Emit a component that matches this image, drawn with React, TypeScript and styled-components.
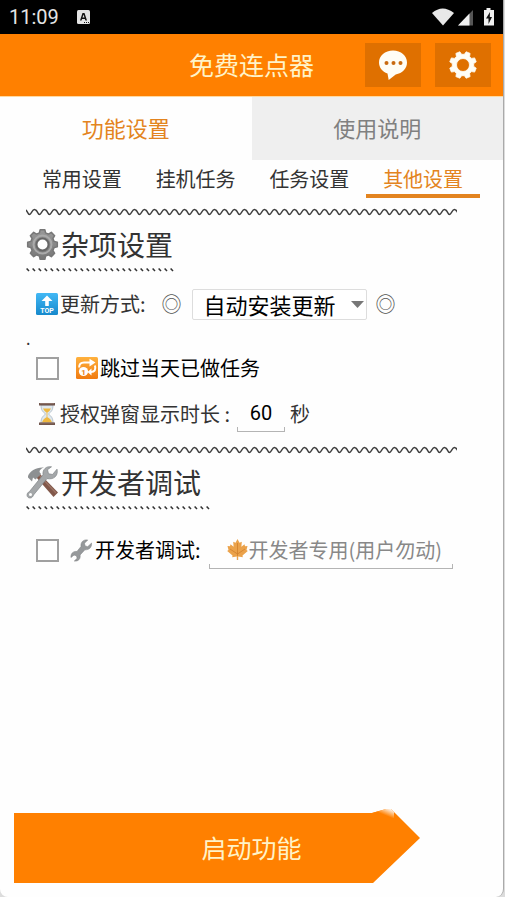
import React, { useState } from "react";
import styled, { createGlobalStyle } from "styled-components";

const ORANGE = "#ff8000";
const ACCENT = "#e38420";

const GlobalStyle = createGlobalStyle`
  *, *::before, *::after { box-sizing: border-box; }
  body {
    margin: 0;
    background: #dcdcdc;
    color: #333;
    font-family: "Noto Sans CJK SC", "Noto Sans", sans-serif;
  }
  button, input, select { font: inherit; color: inherit; margin: 0; }
`;

const Phone = styled.div`
  display: flex;
  flex-direction: column;
  min-height: 100vh;
  margin-right: 1px;
  border-right: 1px solid #aaa;
  border-radius: 0 0 8px 8px;
  background: #fefefe;
  overflow: hidden;
`;

const StatusBar = styled.div`
  display: flex;
  align-items: center;
  height: 34px;
  padding: 0 8px 0 9px;
  background: #000;
  color: #e4e4e4;
  font: 400 20px/34px Roboto, sans-serif;
`;

const StatusIcons = styled.div`
  display: flex;
  align-items: center;
  flex: 1;
  margin-left: 18px;
`;

const Spacer = styled.span`
  flex: 1;
`;

const Header = styled.header`
  display: grid;
  grid-template-columns: 1fr auto 1fr;
  align-items: center;
  height: 63px;
  padding: 0 12px;
  background: ${ORANGE};
  border-bottom: 1px solid #ffd9a0;
`;

const Title = styled.h1`
  grid-column: 2;
  margin: 0;
  padding-bottom: 2px;
  font-size: 25px;
  line-height: 40px;
  font-weight: 400;
  color: #fff3c8;
`;

const HeaderActions = styled.div`
  display: flex;
  justify-content: flex-end;
  gap: 14px;
`;

const HeaderButton = styled.button`
  display: grid;
  place-items: center;
  width: 56px;
  height: 44px;
  padding: 0;
  border: 0;
  background: #df7000;
`;

const Tabs = styled.nav`
  display: grid;
  grid-template-columns: 1fr 1fr;
`;

const Tab = styled.button<{ $active: boolean }>`
  height: 63px;
  padding: 0 0 4px;
  border: 0;
  font-size: 22px;
  background: ${(p) => (p.$active ? "#fefefe" : "#efefef")};
  color: ${(p) => (p.$active ? ACCENT : "#808080")};
`;

const SubTabs = styled.nav`
  display: grid;
  grid-template-columns: repeat(4, 1fr);
  margin: 0 23px 0 25px;
`;

const SubTab = styled.button<{ $active: boolean }>`
  height: 38px;
  padding: 4px 0 0;
  border: 0;
  border-bottom: 4px solid ${(p) => (p.$active ? ACCENT : "transparent")};
  background: none;
  font-size: 20px;
  line-height: 30px;
  white-space: nowrap;
  color: ${(p) => (p.$active ? ACCENT : "#333")};
`;

const Main = styled.main`
  flex: 1;
  padding: 10px 26px 0;
`;

const Section = styled.section`
  margin-bottom: 9px;
`;

const WaveSvg = styled.svg`
  display: block;
  width: calc(100% - 20px);
  height: 8px;
`;

const SectionHead = styled.div`
  width: fit-content;
`;

const SectionTitle = styled.h2`
  display: flex;
  align-items: center;
  gap: 2px;
  margin: 6px 0 2px;
  font-size: 28px;
  line-height: 44px;
  font-weight: 400;
`;

const TickSvg = styled.svg`
  display: block;
  height: 4px;
`;

const Row = styled.div<{ $height: number }>`
  display: flex;
  align-items: center;
  height: ${(p) => p.$height}px;
  padding-left: 10px;
  font-size: 20px;
  line-height: 28px;
  white-space: nowrap;
`;

const UpdateRow = styled(Row)`
  margin-top: 5px;
`;

const Label = styled.label<{ $strong?: boolean }>`
  display: flex;
  align-items: center;
  gap: 2px;
  color: ${(p) => (p.$strong ? "#000" : "#333")};
`;

const Ring = styled.span`
  width: 20px;
  color: #555;
`;

const SelectBox = styled.div`
  position: relative;
  margin: 0 9px 0 10px;
  svg {
    position: absolute;
    right: 3px;
    top: 12px;
    pointer-events: none;
  }
`;

const UpdateControls = styled.div`
  display: flex;
  align-items: center;
  margin-left: 16px;
`;

const Select = styled.select`
  appearance: none;
  display: block;
  width: 175px;
  height: 31px;
  padding: 0 20px 2px 11px;
  border: 1px solid #ddd;
  border-radius: 2px;
  background: #fff;
  color: #000;
  font-size: 22px;
  line-height: 28px;
`;

const Dot = styled.p`
  margin: 0;
  font-size: 16px;
  line-height: 14px;
`;

const Check = styled.input<{ $gap: number }>`
  appearance: none;
  flex: none;
  width: 23px;
  height: 23px;
  margin-right: ${(p) => p.$gap}px;
  border: 2px solid #a0a0a0;
  background: #fff;
  &:checked { background: ${ACCENT}; box-shadow: inset 0 0 0 3px #fff; }
`;

const bracket = `
  linear-gradient(#b4b4b4, #b4b4b4) left bottom / 100% 1px no-repeat,
  linear-gradient(#b4b4b4, #b4b4b4) left bottom / 1px 5px no-repeat,
  linear-gradient(#b4b4b4, #b4b4b4) right bottom / 1px 5px no-repeat`;

const NumberInput = styled.input`
  width: 48px;
  height: 36px;
  margin: 0 5px 0 7px;
  padding: 0 0 2px;
  border: 0;
  background: ${bracket};
  color: #000;
  text-align: center;
  font-family: Roboto, sans-serif;
`;

const KeyField = styled.div`
  position: relative;
  margin-left: 8px;
  svg {
    position: absolute;
    left: 18px;
    top: 6px;
    pointer-events: none;
  }
`;

const KeyInput = styled.input`
  display: block;
  width: 244px;
  height: 37px;
  padding: 0 4px 2px 40px;
  border: 0;
  background: ${bracket};
  &::placeholder { color: #888; opacity: 1; }
`;

const Footer = styled.footer`
  display: flex;
  padding: 0 14px 14px;
`;

const StartButton = styled.button`
  position: relative;
  isolation: isolate;
  flex: 1;
  height: 70px;
  padding: 0 0 2px;
  border: 0;
  background: none;
  color: #fff3c8;
  font-size: 25px;
  &::before {
    content: "";
    position: absolute;
    z-index: -1;
    inset: -4px 69px 0 0;
    background:
      linear-gradient(to top right, ${ORANGE} 45%, #fefefe 95%) right 26px top / 22px 9px no-repeat,
      ${ORANGE};
    clip-path: polygon(0 4px, calc(100% - 48px) 4px, calc(100% - 34px) 0, calc(100% - 29px) 0, 100% 29px, calc(100% - 47px) 100%, 0 100%);
  }
`;

function gearPath(c: number, outer: number, root: number, offset: number) {
  const points: string[] = [];
  for (let i = 0; i < 8; i++) {
    const mid = offset + (i * 360) / 8;
    [[-15, root], [-9, outer], [9, outer], [15, root]].forEach(([d, r]) => {
      const a = ((mid + d - 90) * Math.PI) / 180;
      points.push(`${(c + r * Math.cos(a)).toFixed(2)} ${(c + r * Math.sin(a)).toFixed(2)}`);
    });
  }
  return `M${points.join("L")}Z`;
}

const Wave = () => (
  <WaveSvg aria-hidden="true">
    <defs>
      <pattern id="wave" width="10" height="8" patternUnits="userSpaceOnUse">
        <path d="M-1.500 1.500C1.500 1.500 1.500 6.500 3.500 6.500S6 1.500 8.500 1.500s3 5 5 5" fill="none" stroke="#3c3c3c" strokeWidth="1.400" />
      </pattern>
    </defs>
    <rect width="100%" height="8" fill="url(#wave)" />
  </WaveSvg>
);

const Ticks = ({ count }: { count: number }) => (
  <TickSvg width={count * 6} height="4" aria-hidden="true">
    {Array.from({ length: count }, (_, i) => (
      <path key={i} d={`M${i * 6 + 0.6} 0.5l2.400 2.600`} stroke="#333" strokeWidth="1.5" />
    ))}
  </TickSvg>
);

const KeyboardIcon = () => (
  <svg width="13" height="14" viewBox="0 0 13 14" aria-hidden="true">
    <rect width="13" height="14" rx="1.500" fill="#e4e4e4" />
    <path d="M3 10.500L5.500 3h2L10 10.500H8.400L7.900 9H5L4.600 10.500zM5.500 7.500h2L6.500 4.600z" fill="#111" />
    <path d="M7 12.500h1m1 0h1m1 0h1" stroke="#111" />
  </svg>
);

const SignalIcons = () => (
  <svg width="63" height="20" viewBox="0 0 63 20" aria-hidden="true">
    <path d="M0 6Q10.500-3 22 6L11 18.500z" fill="#e8e8e8" />
    <path d="M41 3v15.500H26z" fill="#555" />
    <path d="M37.500 6.500v12H26z" fill="#f0f0f0" />
    <path d="M54.500 1h4v2H62v15.500H52V3h2.500z" fill="#f0f0f0" />
    <path d="M58 5l-4 6.500h2.500V17L60 10h-2.200z" fill="#111" />
  </svg>
);

const ChatIcon = () => (
  <svg width="30" height="32" viewBox="0 0 30 32" aria-hidden="true">
    <path d="M15 1.500C7 1.500 1 6.500 1 13.500c0 5 3.300 9 8.500 11l1.200 6.500 7-5.600C24.500 24.300 29 19.500 29 13.500 29 6.500 23 1.500 15 1.500z" fill="#fffdf5" />
    <g fill="#c96a10"><circle cx="8.500" cy="14" r="2" /><circle cx="15.500" cy="14" r="2" /><circle cx="22.500" cy="14" r="2" /></g>
  </svg>
);

const SettingsIcon = () => (
  <svg width="30" height="30" viewBox="0 0 30 30" aria-hidden="true">
    <path fillRule="evenodd" d={gearPath(15, 13.6, 10.8, 22.5) + "M21.500 15a6.500 6.500 0 1 0-13 0a6.500 6.500 0 1 0 13 0Z"} fill="#fffdf5" stroke="#fffdf5" strokeWidth=".8" strokeLinejoin="round" />
  </svg>
);

const GearEmoji = () => (
  <svg width="33" height="33" viewBox="0 0 33 33" aria-hidden="true">
    <defs>
      <linearGradient id="steel" x2="0" y2="1"><stop stopColor="#999" /><stop offset="1" stopColor="#777" /></linearGradient>
    </defs>
    <path d={gearPath(16.5, 15, 12, 0)} fill="url(#steel)" stroke="#777" strokeWidth="1.500" strokeLinejoin="round" />
    <circle cx="16.500" cy="16.500" r="9" fill="none" stroke="#aaa" strokeWidth="2" />
    <circle cx="16.500" cy="16.500" r="6" fill="#fefefe" stroke="#666" strokeWidth="2" />
  </svg>
);

const TopEmoji = () => (
  <svg width="22" height="22" viewBox="0 0 22 22" aria-hidden="true">
    <defs>
      <linearGradient id="sky" x2="0" y2="1"><stop stopColor="#42b8f5" /><stop offset="1" stopColor="#1689cc" /></linearGradient>
    </defs>
    <rect width="22" height="22" rx="1.500" fill="url(#sky)" />
    <path d="M11 2.500l5.500 5.500h-3.700v5H9.200V8H5.500z" fill="#fff" />
    <text x="11" y="20" textAnchor="middle" fontFamily="Roboto, sans-serif" fontSize="7" fontWeight="700" fill="#fff">TOP</text>
  </svg>
);

const RepeatEmoji = () => (
  <svg width="22" height="22" viewBox="0 0 22 22" aria-hidden="true">
    <defs>
      <linearGradient id="amber" x2="0" y2="1"><stop stopColor="#ffb13d" /><stop offset="1" stopColor="#f07a10" /></linearGradient>
    </defs>
    <rect width="22" height="22" rx="1.500" fill="url(#amber)" />
    <path d="M3.200 10.500Q3 5.500 8 5.500h6M19 8.500q1.500 6.500-4 6.500" fill="none" stroke="#fff" strokeWidth="2" />
    <path d="M13.500 1.800L19.500 5.500l-6 4zM15.500 11.500v7l-4-3.500z" fill="#fff" />
    <circle cx="7.500" cy="14.500" r="4.600" fill="#fff" />
    <text x="7.500" y="17.500" textAnchor="middle" fontFamily="Roboto, sans-serif" fontSize="8" fontWeight="700" fill="#e98317">1</text>
  </svg>
);

const HourglassEmoji = () => (
  <svg width="22" height="24" viewBox="0 0 22 24" aria-hidden="true">
    <path d="M5 3h12c0 5-1.500 6.500-4.500 9 3 2.500 4.500 4 4.500 9H5c0-5 1.500-6.500 4.500-9C6.500 9.500 5 8 5 3z" fill="#dfe8ee" stroke="#a9b8c2" strokeWidth=".8" />
    <path d="M7 6.500h8q-1 2.500-4 4.500-3-2-4-4.500zM11 15q4 1.500 5 5.500H6q1-4 5-5.500zM10.600 11h.8v5h-.8z" fill="#efb83f" />
    <path d="M3 1h16v2.600H3zM3 20.400h16V23H3z" fill="#72574e" />
    <path d="M4 1.500h14M4 21h14" stroke="#947970" strokeWidth=".8" />
  </svg>
);

const ToolsEmoji = () => (
  <svg width="33" height="33" viewBox="0 0 33 33" aria-hidden="true">
    <path d="M10 11l3.500-3.500L32 26.500 27.500 31z" fill="#82584a" />
    <path d="M13 9l17 18" stroke="#9d7465" strokeWidth="1.200" />
    <path d="M2 10c2-5 8-9 16-8.500-3 1-4.500 2.500-4.500 4.500l1.500 2-5.500 5.500-2.500-2-1 4-4-4z" fill="#8d9092" />
    <path d="M31 3.200l-4.500 5.300-4-.8-1-4L25.500.8c-5-1-9.200 2.500-8.500 8L3.500 25.500C0 27 .3 32 4 32c2 0 3-1.500 3.500-3L21 12.600C28 14 32.500 9.500 31 3.200z" fill="#a4a7a9" stroke="#808486" strokeWidth=".7" />
    <circle cx="4.500" cy="28.500" r="1.500" fill="#fefefe" />
  </svg>
);

const WrenchEmoji = () => (
  <svg width="23" height="23" viewBox="0 0 24 24" aria-hidden="true">
    <path d="M22.500 4.300l-4 3.700-2.800-.8-.6-2.800L18.500 1c-4.500-.6-7.500 2-7 6.800L7.300 13C3.200 12.600.8 15 1 19.300l3.200-2.500 2.500.6.800 2.700L4.500 23c4.200.5 6.700-2.200 6-6.300l5-5.400c4.500.2 7.300-2.600 7-7z" fill="#96999b" stroke="#7e8183" strokeWidth=".6" />
  </svg>
);

const LeafEmoji = () => (
  <svg width="21" height="23" viewBox="0 0 21 23" aria-hidden="true">
    <path d="M10.500 1l2 3.700 2.300-1-.4 5 3.100-2.500.5 2 2.500-.3-1 4 1.300 1.100-5.300 4.500.3 1.800-4.600-.7V22h-1.400v-3.400l-4.600.7.300-1.800L.2 13l1.300-1.100-1-4 2.500.3.500-2 3.100 2.500-.4-5 2.300 1z" fill="#eba24a" />
    <path d="M10.500 5v13M10.500 16L3 11M10.500 16L18 11" stroke="#cd7b28" strokeWidth=".7" fill="none" />
  </svg>
);

const SUB_TABS = ["常用设置", "挂机任务", "任务设置", "其他设置"];

export default function App() {
  const [tab, setTab] = useState("功能设置");
  const [subTab, setSubTab] = useState("其他设置");
  const [duration, setDuration] = useState("60");

  return (
    <>
      <GlobalStyle />
      <Phone>
        <StatusBar>
          <span>11:09</span>
          <StatusIcons>
            <KeyboardIcon />
            <Spacer />
            <SignalIcons />
          </StatusIcons>
        </StatusBar>
        <Header>
          <Title>免费连点器</Title>
          <HeaderActions>
            <HeaderButton aria-label="消息"><ChatIcon /></HeaderButton>
            <HeaderButton aria-label="设置"><SettingsIcon /></HeaderButton>
          </HeaderActions>
        </Header>
        <Tabs>
          {["功能设置", "使用说明"].map((name) => (
            <Tab key={name} $active={name === tab} onClick={() => setTab(name)}>{name}</Tab>
          ))}
        </Tabs>
        <SubTabs>
          {SUB_TABS.map((name) => (
            <SubTab key={name} $active={name === subTab} onClick={() => setSubTab(name)}>{name}</SubTab>
          ))}
        </SubTabs>
        <Main>
          <Section>
            <Wave />
            <SectionHead>
              <SectionTitle><GearEmoji />杂项设置</SectionTitle>
              <Ticks count={25} />
            </SectionHead>
            <UpdateRow $height={54}>
              <Label htmlFor="update"><TopEmoji />更新方式:</Label>
              <UpdateControls>
                <Ring>◎</Ring>
                <SelectBox>
                  <Select id="update" defaultValue="auto">
                    <option value="auto">自动安装更新</option>
                    <option value="manual">手动更新</option>
                  </Select>
                  <svg width="13" height="8" aria-hidden="true"><path d="M0 0h13L6.500 7z" fill="#777" /></svg>
                </SelectBox>
                <Ring>◎</Ring>
              </UpdateControls>
            </UpdateRow>
            <Dot>.</Dot>
            <Row $height={46}>
              <Check id="skip" type="checkbox" $gap={17} />
              <Label htmlFor="skip" $strong><RepeatEmoji />跳过当天已做任务</Label>
            </Row>
            <Row $height={46}>
              <Label htmlFor="duration"><HourglassEmoji />授权弹窗显示时长 :</Label>
              <NumberInput id="duration" inputMode="numeric" value={duration} onChange={(e) => setDuration(e.target.value)} />
              秒
            </Row>
          </Section>
          <Section>
            <Wave />
            <SectionHead>
              <SectionTitle><ToolsEmoji />开发者调试</SectionTitle>
              <Ticks count={31} />
            </SectionHead>
            <Row $height={80}>
              <Check id="debug" type="checkbox" $gap={11} />
              <Label htmlFor="debug" $strong><WrenchEmoji />开发者调试:</Label>
              <KeyField>
                <LeafEmoji />
                <KeyInput aria-label="开发者专用" placeholder="开发者专用(用户勿动)" />
              </KeyField>
            </Row>
          </Section>
        </Main>
        <Footer>
          <StartButton>启动功能</StartButton>
        </Footer>
      </Phone>
    </>
  );
}
